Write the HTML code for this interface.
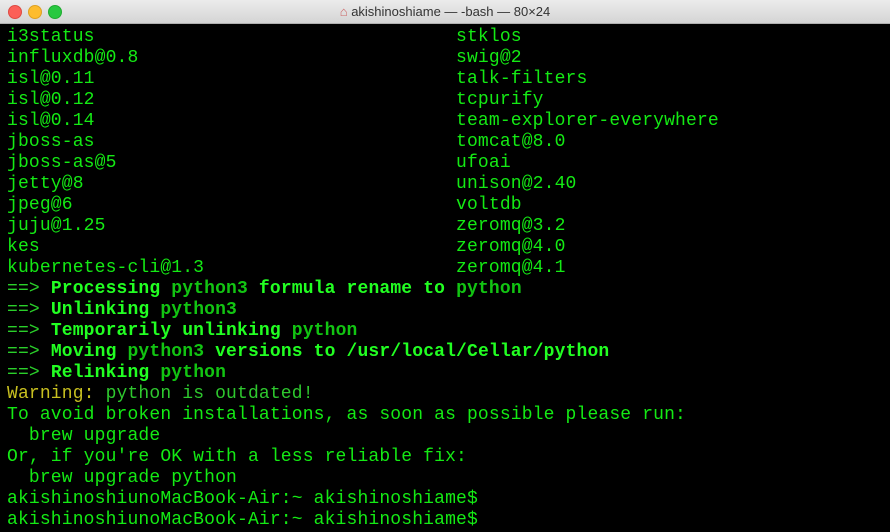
<!DOCTYPE html>
<html><head><meta charset="utf-8"><style>
html,body{margin:0;padding:0;width:890px;height:532px;overflow:hidden;background:#000}
.tb{position:absolute;left:0;top:0;width:890px;height:23px;background:linear-gradient(#ececec,#d4d4d4);border-bottom:1px solid #b0b0b0;font-family:"Liberation Sans",sans-serif;font-size:13px;color:#333;text-align:center;line-height:23px}
.d{position:absolute;top:5px;width:12px;height:12px;border-radius:50%}
.t{position:absolute;left:7px;top:27px;font-family:"Liberation Mono",monospace;font-size:18px;letter-spacing:0.15px;line-height:21px;color:#14ea14;white-space:pre}
b{color:#22ff22}
b i{font-style:normal;color:#12c412}
.a{color:#2ad02a}
.y{color:#c8c020}
.g{color:#2ec82e}
</style></head><body>
<div class="tb"><div class="d" style="left:8px;background:#fc5f57;border:0.5px solid #de4a42"></div><div class="d" style="left:28px;background:#fdbc2e;border:0.5px solid #dea123"></div><div class="d" style="left:48px;background:#28c840;border:0.5px solid #1fab30"></div><span style="color:#c66">⌂</span> akishinoshiame — -bash — 80×24</div>
<div class="t">i3status                                 stklos
influxdb@0.8                             swig@2
isl@0.11                                 talk-filters
isl@0.12                                 tcpurify
isl@0.14                                 team-explorer-everywhere
jboss-as                                 tomcat@8.0
jboss-as@5                               ufoai
jetty@8                                  unison@2.40
jpeg@6                                   voltdb
juju@1.25                                zeromq@3.2
kes                                      zeromq@4.0
kubernetes-cli@1.3                       zeromq@4.1
<span class="a">==&gt;</span> <b>Processing <i>python3</i> formula rename to <i>python</i></b>
<span class="a">==&gt;</span> <b>Unlinking <i>python3</i></b>
<span class="a">==&gt;</span> <b>Temporarily unlinking <i>python</i></b>
<span class="a">==&gt;</span> <b>Moving <i>python3</i> versions to /usr/local/Cellar/python</b>
<span class="a">==&gt;</span> <b>Relinking <i>python</i></b>
<span class="y">Warning:</span><span class="g"> python is outdated!</span>
To avoid broken installations, as soon as possible please run:
  brew upgrade
Or, if you're OK with a less reliable fix:
  brew upgrade python
akishinoshiunoMacBook-Air:~ akishinoshiame$
akishinoshiunoMacBook-Air:~ akishinoshiame$</div>
</body></html>
